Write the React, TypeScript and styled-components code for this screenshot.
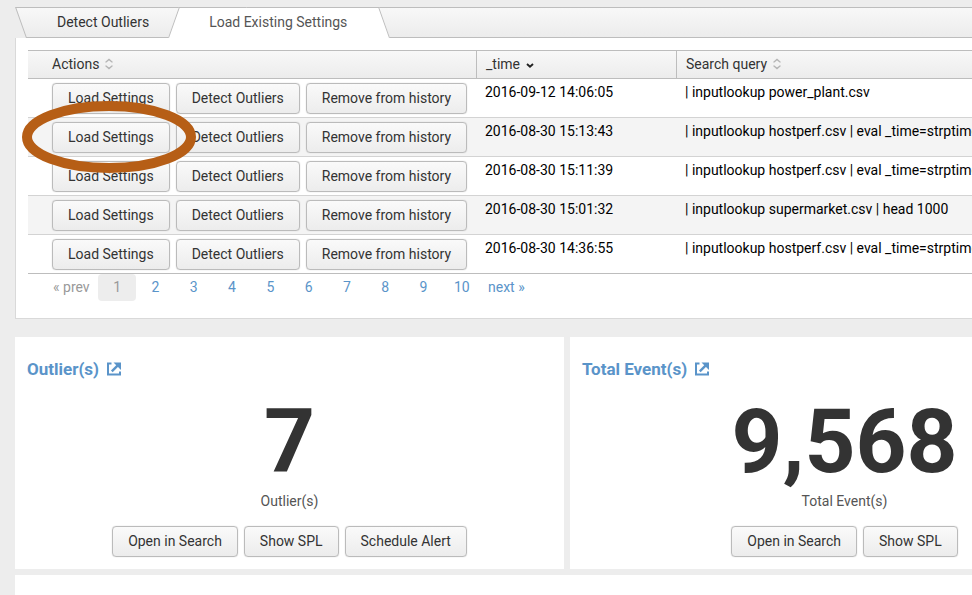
import React, { useState } from "react";
import styled, { createGlobalStyle } from "styled-components";

const line = "#bdbdbd";
const fade = "linear-gradient(#f8f8f8, #ececec)";
const slant = "19.5deg";

const GlobalStyle = createGlobalStyle`
  * { box-sizing: border-box; }
  body {
    margin: 0;
    background: #ededed;
    color: #333;
    font: 14px/20px Roboto, "Liberation Sans", sans-serif;
  }
`;

const Page = styled.main`
  min-height: 100vh;
  overflow: hidden;
  padding: 7px 0 0 15px;
`;

const TabBar = styled.div`
  position: relative;
  display: flex;
  height: 31px;
  min-width: 1108px;
  padding-left: 12px;
  z-index: 0;

  &::before {
    content: "";
    position: absolute;
    z-index: -1;
    inset: 0 -40px 0 0;
    border: 1px solid ${line};
    background: ${fade};
    transform: skewX(${slant});
    transform-origin: top left;
  }
`;

const Tab = styled.button<{ $active?: boolean }>`
  position: relative;
  z-index: 0;
  height: 31px;
  border: 0;
  padding: ${(p) => (p.$active ? "0 43px 1px 41px" : "0 19px 1px 30px")};
  background: none;
  font: inherit;
  color: ${(p) => (p.$active ? "#555" : "#333")};
  cursor: pointer;

  &::before,
  &::after {
    content: "";
    display: ${(p) => (p.$active ? "block" : "none")};
    position: absolute;
    z-index: -1;
    top: 0;
    bottom: 0;
    background: #fff;
    border-top: 1px solid ${line};
  }
  &::before {
    left: 0;
    right: 40%;
    border-left: 1px solid ${line};
    transform: skewX(-${slant});
    transform-origin: bottom left;
  }
  &::after {
    right: 0;
    left: 40%;
    border-right: 1px solid ${line};
    transform: skewX(${slant});
    transform-origin: bottom right;
  }
`;

const TabPanel = styled.section`
  min-width: 1108px;
  padding: 12px;
  border: 1px solid #d9d9d9;
  border-top: 0;
  background: #fff;
`;

const Table = styled.table`
  width: 100%;
  table-layout: fixed;
  border-collapse: separate;
  border-spacing: 0;
`;

const HeadCell = styled.th<{ $width?: number; $first?: boolean }>`
  width: ${(p) => (p.$width ? `${p.$width}px` : "auto")};
  height: 29px;
  padding: 0 8px 2px ${(p) => (p.$first ? 24 : 9)}px;
  border: solid ${line};
  border-width: 1px 0 1px ${(p) => (p.$first ? 0 : 1)}px;
  background: ${fade};
  font-weight: 400;
  text-align: left;
`;

const SortButton = styled.button`
  display: flex;
  align-items: center;
  gap: 6px;
  padding: 0;
  border: 0;
  background: none;
  color: inherit;
  font: inherit;
  cursor: pointer;
`;

const Row = styled.tr`
  &:nth-child(even) { background: #f4f4f4; }
  &:last-child > td { border-bottom-color: ${line}; }
`;

const Cell = styled.td`
  height: 39px;
  padding: 3px 9px;
  border-bottom: 1px solid #d3d3d3;
  color: #000;
  vertical-align: top;
  white-space: nowrap;
`;

const ActionCell = styled(Cell)`
  padding: 4px 0 3px 24px;
`;

const ButtonGroup = styled.div`
  position: relative;
  display: flex;
  gap: 6px;
`;

const Button = styled.button`
  height: 31px;
  padding: 0 15px 2px;
  border: 1px solid #bbb;
  border-radius: 4px;
  background: linear-gradient(#fafafa, #ececec);
  box-shadow: 0 0 1px #bbb;
  color: #333;
  font: inherit;
  line-height: 20px;
  white-space: nowrap;
  cursor: pointer;
`;

const Mark = styled.svg`
  position: absolute;
  z-index: 1;
  top: -21px;
  left: -30px;
  pointer-events: none;
`;

const Pager = styled.nav`
  display: flex;
  height: 32px;
  line-height: 27px;
`;

const PrevLabel = styled.span`
  width: 46px;
  margin-left: 24px;
  padding-left: 1px;
  color: #999;
`;

const PageList = styled.div`
  display: grid;
  grid-template-columns: repeat(10, 1fr);
  width: 383px;
  text-align: center;
`;

const PageLink = styled.a<{ $current?: boolean }>`
  height: 27px;
  border-radius: 4px;
  background: ${(p) => (p.$current ? "#ededed" : "none")};
  color: ${(p) => (p.$current ? "#999" : "#5a94c9")};
  text-decoration: none;
`;

const NextLink = styled(PageLink)`
  padding-left: 7px;
`;

const Cards = styled.div`
  display: grid;
  grid-template-columns: repeat(2, 1fr);
  gap: 6px;
  min-width: 1104px;
  margin: 18px 0 6px;
`;

const Card = styled.section`
  display: flex;
  flex-direction: column;
  align-items: center;
  padding: 22px 12px 12px;
  background: #fff;
`;

const CardTitle = styled.h2`
  align-self: flex-start;
  margin: 0;
  font-size: 17px;
  line-height: 20px;
`;

const TitleLink = styled.a`
  display: flex;
  align-items: center;
  gap: 8px;
  color: #5a94c9;
  text-decoration: none;
`;

const Figure = styled.div`
  margin-top: 18px;
  color: #333;
  font-size: 89px;
  font-weight: 700;
  line-height: 90px;
`;

const Caption = styled.div`
  margin: 4px 0 15px;
  color: #555;
`;

const NextCard = styled.section`
  min-width: 1108px;
  height: 60px;
  margin-bottom: -40px;
  background: #fff;
`;

const SortIcon = () => (
  <svg width="8" height="12" viewBox="0 0 8 12" fill="none" stroke="#b5b5b5" strokeWidth="1.4" aria-hidden="true">
    <path d="M1 4.6V4L4 1.4L7 4V4.6M1 7.4V8L4 10.6L7 8V7.4" />
  </svg>
);

const SortedIcon = () => (
  <svg width="8" height="12" viewBox="0 0 8 12" fill="none" stroke="#222" strokeWidth="1.9" aria-hidden="true">
    <path d="M1 6L4 8.8L7 6" />
  </svg>
);

const ExternalIcon = () => (
  <svg width="14" height="14" viewBox="0 0 14 14" fill="none" stroke="currentColor" strokeWidth="2" aria-hidden="true">
    <path d="M4.5 1.5H1V12.5H13V9.5" />
    <path d="M4.8 9.4L10.5 3.7" strokeWidth="2.4" />
    <path d="M6.5 0.5H14V8Z" fill="currentColor" stroke="none" />
  </svg>
);

const history = [
  ["2016-09-12 14:06:05", "| inputlookup power_plant.csv"],
  ["2016-08-30 15:13:43", "| inputlookup hostperf.csv | eval _time=strptime"],
  ["2016-08-30 15:11:39", "| inputlookup hostperf.csv | eval _time=strptime"],
  ["2016-08-30 15:01:32", "| inputlookup supermarket.csv | head 1000"],
  ["2016-08-30 14:36:55", "| inputlookup hostperf.csv | eval _time=strptime"],
];

const cards = [
  { title: "Outlier(s)", value: "7", actions: ["Open in Search", "Show SPL", "Schedule Alert"] },
  { title: "Total Event(s)", value: "9,568", actions: ["Open in Search", "Show SPL"] },
];

export default function App() {
  const [page, setPage] = useState(1);
  return (
    <Page>
      <GlobalStyle />
      <TabBar role="tablist">
        <Tab role="tab" aria-selected={false}>Detect Outliers</Tab>
        <Tab role="tab" aria-selected $active>Load Existing Settings</Tab>
      </TabBar>
      <TabPanel role="tabpanel">
        <Table>
          <thead>
            <tr>
              <HeadCell $width={448} $first><SortButton>Actions <SortIcon /></SortButton></HeadCell>
              <HeadCell $width={200}><SortButton>_time <SortedIcon /></SortButton></HeadCell>
              <HeadCell><SortButton>Search query <SortIcon /></SortButton></HeadCell>
            </tr>
          </thead>
          <tbody>
            {history.map(([time, query], i) => (
              <Row key={time}>
                <ActionCell>
                  <ButtonGroup>
                    <Button>Load Settings</Button>
                    <Button>Detect Outliers</Button>
                    <Button>Remove from history</Button>
                    {i === 1 && (
                      <Mark width="174" height="72" viewBox="0 0 174 72" aria-hidden="true">
                        <ellipse cx="87" cy="36" rx="82" ry="31" fill="none" stroke="#b65e16" strokeWidth="10" />
                      </Mark>
                    )}
                  </ButtonGroup>
                </ActionCell>
                <Cell>{time}</Cell>
                <Cell>{query}</Cell>
              </Row>
            ))}
          </tbody>
        </Table>
        <Pager aria-label="History pages">
          <PrevLabel>« prev</PrevLabel>
          <PageList>
            {Array.from({ length: 10 }, (_, i) => i + 1).map((n) => (
              <PageLink key={n} href={`#page-${n}`} $current={n === page} onClick={() => setPage(n)}>{n}</PageLink>
            ))}
          </PageList>
          <NextLink href="#next" onClick={() => setPage(Math.min(10, page + 1))}>next »</NextLink>
        </Pager>
      </TabPanel>
      <Cards>
        {cards.map((card) => (
          <Card key={card.title}>
            <CardTitle><TitleLink href="#search">{card.title}<ExternalIcon /></TitleLink></CardTitle>
            <Figure>{card.value}</Figure>
            <Caption>{card.title}</Caption>
            <ButtonGroup>
              {card.actions.map((label) => <Button key={label}>{label}</Button>)}
            </ButtonGroup>
          </Card>
        ))}
      </Cards>
      <NextCard />
    </Page>
  );
}
